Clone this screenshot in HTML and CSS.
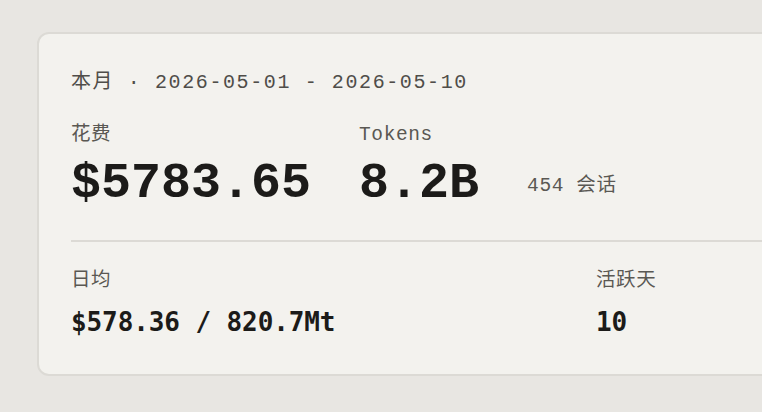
FILE: index.html
```html
<!DOCTYPE html>
<html lang="zh">
<head>
<meta charset="utf-8">
<link rel="stylesheet" href="styles.css">
</head>
<body>
<div class="card">
  <div class="period">本月 · 2026-05-01 - 2026-05-10</div>
  <div class="metrics">
    <div class="metric">
      <div class="label">花费</div>
      <div class="big">$5783.65</div>
    </div>
    <div class="metric">
      <div class="label">Tokens</div>
      <div class="big">8.2B</div>
    </div>
    <div class="sessions">454 会话</div>
  </div>
  <div class="divider"></div>
  <div class="stats">
    <div class="stat">
      <div class="label">日均</div>
      <div class="value">$578.36 / 820.7Mt</div>
    </div>
    <div class="stat">
      <div class="label">活跃天</div>
      <div class="value">10</div>
    </div>
  </div>
</div>
</body>
</html>
```

FILE: styles.css
```css
html, body {
  margin: 0;
  padding: 0;
  background: #e8e6e2;
  overflow: hidden;
}
body {
  padding: 32px 0 0 37px;
  font-family: "Liberation Mono", "Noto Sans CJK SC", monospace;
}
.card {
  width: 1118px;
  box-sizing: border-box;
  background: #f3f2ee;
  border: 2px solid #dcdad5;
  border-radius: 12px;
  padding: 34px 32px 35px 32px;
}
.period {
  font-family: "Liberation Mono", "Noto Sans CJK SC", monospace;
  font-size: 20px;
  letter-spacing: 1.6px;
  line-height: 30px;
  color: #4f4d49;
}
.metrics {
  display: flex;
  align-items: flex-end;
  gap: 48px;
  margin-top: 25px;
}
.label,
.sessions {
  font-family: "Liberation Mono", "Noto Sans CJK SC", monospace;
  font-size: 19.5px;
  letter-spacing: 0.6px;
  line-height: 24px;
  color: #5a5853;
}
.big {
  margin-top: 9px;
  font-family: "Liberation Mono", monospace;
  font-weight: 700;
  font-size: 50px;
  line-height: 56px;
  color: #1c1b19;
}
.sessions {
  padding-bottom: 14px;
}
.divider {
  height: 2px;
  background: #dcdad5;
  margin-top: 28px;
}
.stats {
  display: grid;
  grid-template-columns: 1fr 1fr;
  margin-top: 27px;
}
.value {
  margin-top: 12px;
  font-family: "DejaVu Sans Mono", monospace;
  font-weight: 700;
  font-size: 26px;
  letter-spacing: -0.1px;
  line-height: 34px;
  color: #1c1b19;
}
```
